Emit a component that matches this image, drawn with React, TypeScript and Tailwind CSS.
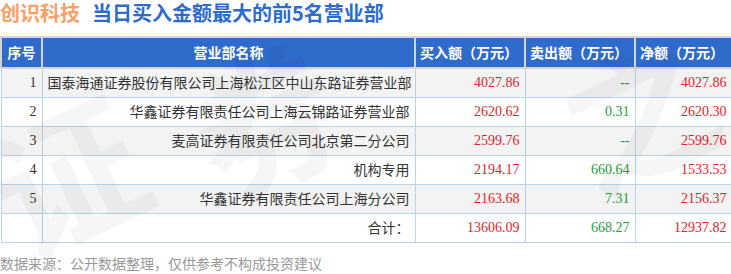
const rows = [
  { no: '1', name: '国泰海通证券股份有限公司上海松江区中山东路证券营业部', buy: '4027.86', sell: '--', net: '4027.86' },
  { no: '2', name: '华鑫证券有限责任公司上海云锦路证券营业部', buy: '2620.62', sell: '0.31', net: '2620.30' },
  { no: '3', name: '麦高证券有限责任公司北京第二分公司', buy: '2599.76', sell: '--', net: '2599.76' },
  { no: '4', name: '机构专用', buy: '2194.17', sell: '660.64', net: '1533.53' },
  { no: '5', name: '华鑫证券有限责任公司上海分公司', buy: '2163.68', sell: '7.31', net: '2156.37' },
];

const th = 'h-[31px] border-2 border-[#d4d4d4] bg-[#2f6bcb] text-white font-bold text-[14px] p-0';
const td = 'h-[29px] border border-[#b9d2ea] px-[5px] py-0 text-[14px] text-right';

export default function App() {
  return (
    <div className="relative w-[731px] h-[274px] overflow-hidden bg-white font-['Noto_Sans_CJK_SC',sans-serif]">
      {/* faint watermark */}
      <div className="absolute inset-0 pointer-events-none select-none z-10 text-[150px] font-bold text-black/[0.035] leading-none">
        <span className="absolute left-[-10px] top-[95px] -rotate-[25deg]">证</span>
        <span className="absolute left-[190px] top-[40px] -rotate-[25deg]">券</span>
        <span className="absolute left-[560px] top-[30px] -rotate-[25deg]">之</span>
      </div>

      {/* title */}
      <div className="flex items-center gap-[12px] h-[26px] text-[20px] font-bold leading-none">
        <span className="text-[#f7a266]">创识科技</span>
        <span className="text-[#2d6bcd]">当日买入金额最大的前5名营业部</span>
      </div>

      {/* table */}
      <table className="mt-[10px] w-[731px] border-collapse table-fixed">
        <colgroup>
          <col className="w-[41px]" />
          <col className="w-[373px]" />
          <col className="w-[110px]" />
          <col className="w-[110px]" />
          <col className="w-[97px]" />
        </colgroup>
        <thead>
          <tr>
            <th className={th + ' text-center'}>序号</th>
            <th className={th + ' text-center'}>营业部名称</th>
            <th className={th + ' text-left pl-[4px]'}>买入额（万元）</th>
            <th className={th + ' text-left pl-[4px]'}>卖出额（万元）</th>
            <th className={th + ' text-left pl-[4px]'}>净额（万元）</th>
          </tr>
        </thead>
        <tbody className="font-['Liberation_Serif','Noto_Sans_CJK_SC',serif] text-[#333]">
          {rows.map((r, i) => (
            <tr key={r.no} className={i % 2 === 0 ? 'bg-[#f3f3f3]' : 'bg-white'}>
              <td className={td}>{r.no}</td>
              <td className={td + " font-['Noto_Sans_CJK_SC',sans-serif] whitespace-nowrap"}>{r.name}</td>
              <td className={td + ' text-[#e3242b]'}>{r.buy}</td>
              <td className={td + ' text-[#22a03c]'}>{r.sell}</td>
              <td className={td + ' text-[#e3242b]'}>{r.net}</td>
            </tr>
          ))}
          <tr className="bg-white">
            <td className={td}></td>
            <td className={td + " font-['Noto_Sans_CJK_SC',sans-serif]"}>合计：</td>
            <td className={td + ' text-[#e3242b]'}>13606.09</td>
            <td className={td + ' text-[#22a03c]'}>668.27</td>
            <td className={td + ' text-[#e3242b]'}>12937.82</td>
          </tr>
        </tbody>
      </table>

      {/* source note */}
      <div className="mt-[13px] text-[14px] leading-none text-[#999]">
        数据来源：公开数据整理，仅供参考不构成投资建议
      </div>
    </div>
  );
}
